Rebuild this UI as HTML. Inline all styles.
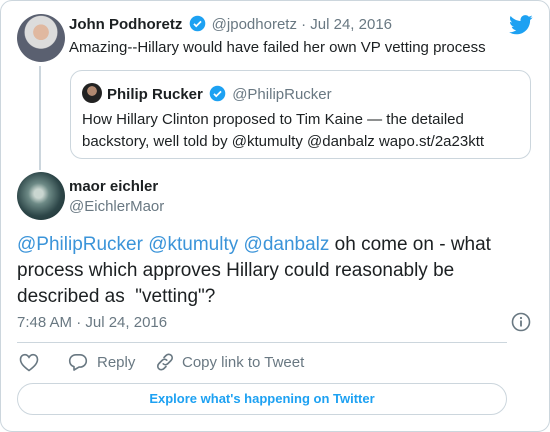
<!DOCTYPE html>
<html><head><meta charset="utf-8"><style>
*{margin:0;padding:0;box-sizing:border-box}
body{width:550px;height:432px;background:#fff;font-family:"Liberation Sans",Arial,sans-serif;color:#1c2022;position:relative;overflow:hidden}
.card{position:absolute;left:0;top:0;width:550px;height:432px;border:1px solid #ccd6dd;border-radius:12px}
.abs{position:absolute;white-space:nowrap}
.av{position:absolute;border-radius:50%}
.b{font-weight:bold}
.g{color:#697882}
.bl{color:#3b94d9}
.ver{display:inline-block;vertical-align:-3px;margin:0 2px}
</style></head><body>
<div class="card"></div>
<div class="av" style="left:17px;top:14px;width:48px;height:48px;background:radial-gradient(circle at 50% 38%,#e0b8a0 0 20%,#dcdcdc 21% 42%,#5a6070 44%);"></div>
<div class="abs b" style="left:69px;top:15px;font-size:15px">John Podhoretz <svg class="ver" width="17" height="17" viewBox="0 0 24 24"><circle cx="12" cy="12" r="11" fill="#1da1f2"/><path d="M7 12.5l3.2 3.2L17 9" stroke="#fff" stroke-width="2.4" fill="none"/></svg> <span class="g" style="font-weight:normal">@jpodhoretz · Jul 24, 2016</span></div>
<svg class="abs" style="left:509px;top:15px" width="24" height="20" viewBox="0 0 24 20"><path fill="#1da1f2" d="M23.6 2.4c-.9.4-1.8.6-2.8.8 1-.6 1.8-1.5 2.1-2.7-.9.6-2 1-3.1 1.2C19 .7 17.7.1 16.3.1c-2.7 0-4.8 2.2-4.8 4.8 0 .4 0 .8.1 1.1C7.6 5.8 4 3.9 1.6 1 1.2 1.7 1 2.5 1 3.4c0 1.7.9 3.2 2.2 4-.8 0-1.5-.2-2.2-.6v.1c0 2.3 1.7 4.3 3.9 4.7-.4.1-.8.2-1.3.2-.3 0-.6 0-.9-.1.6 1.9 2.4 3.3 4.5 3.4-1.7 1.3-3.7 2.1-6 2.1-.4 0-.8 0-1.2-.1 2.1 1.4 4.7 2.2 7.4 2.2 8.9 0 13.7-7.4 13.7-13.7v-.6c1-.7 1.8-1.5 2.5-2.6z"/></svg>
<div class="abs" style="left:69px;top:39px;font-size:15px">Amazing--Hillary would have failed her own VP vetting process</div>
<div class="abs" style="left:39px;top:66px;width:2px;height:104px;background:#ccd6dd"></div>
<div class="abs" style="left:70px;top:70px;width:461px;height:89px;border:1px solid #ccd6dd;border-radius:12px"></div>
<div class="av" style="left:82px;top:83px;width:20px;height:20px;background:radial-gradient(circle at 50% 40%,#b08870 0 30%,#222 32%)"></div>
<div class="abs b" style="left:107px;top:85px;font-size:15px">Philip Rucker <svg class="ver" width="17" height="17" viewBox="0 0 24 24"><circle cx="12" cy="12" r="11" fill="#1da1f2"/><path d="M7 12.5l3.2 3.2L17 9" stroke="#fff" stroke-width="2.4" fill="none"/></svg> <span class="g" style="font-weight:normal">@PhilipRucker</span></div>
<div class="abs" style="left:82px;top:109px;font-size:15px;line-height:22px">How Hillary Clinton proposed to Tim Kaine — the detailed<br>backstory, well told by @ktumulty @danbalz wapo.st/2a23ktt</div>
<div class="av" style="left:17px;top:172px;width:48px;height:48px;background:radial-gradient(circle at 45% 45%,#c9d6d0 0 12%,#6d8a86 28%,#2d4648 60%,#172a2c)"></div>
<div class="abs b" style="left:69px;top:178px;font-size:15px">maor eichler</div>
<div class="abs g" style="left:69px;top:198px;font-size:15px">@EichlerMaor</div>
<div class="abs" style="left:17px;top:232px;font-size:19px;line-height:26px">
<span class="bl">@PhilipRucker @ktumulty @danbalz</span> oh come on - what<br>process which approves Hillary could reasonably be<br>described as &nbsp;"vetting"?</div>
<div class="abs g" style="left:17px;top:314px;font-size:15px">7:48 AM · Jul 24, 2016</div>
<svg class="abs" style="left:511px;top:312px" width="20" height="20" viewBox="0 0 20 20"><circle cx="10" cy="10" r="8.5" stroke="#697882" stroke-width="1.6" fill="none"/><rect x="9.1" y="8.5" width="1.8" height="6" fill="#697882"/><circle cx="10" cy="6" r="1.1" fill="#697882"/></svg>
<div class="abs" style="left:17px;top:342px;width:490px;height:1px;background:#ccd6dd"></div>
<svg class="abs" style="left:19px;top:353px" width="20" height="19" viewBox="0 0 20 19"><path d="M10 17.5C4 13 1.5 10 1.5 6.2 1.5 3.6 3.5 1.7 5.8 1.7c1.8 0 3.2 1 4.2 2.6 1-1.6 2.4-2.6 4.2-2.6 2.3 0 4.3 1.9 4.3 4.5 0 3.8-2.5 6.8-8.5 11.3z" stroke="#697882" stroke-width="1.6" fill="none"/></svg>
<svg class="abs" style="left:68px;top:353px" width="20" height="19" viewBox="0 0 20 19"><path d="M8 1.8h4c3.6 0 6.3 2.7 6.3 6.1 0 3.6-3 6.2-6.6 6.2H11L6 17v-3.3C3.3 12.9 1.7 10.7 1.7 7.9 1.7 4.5 4.4 1.8 8 1.8z" stroke="#697882" stroke-width="1.6" fill="none" stroke-linejoin="round"/></svg>
<div class="abs g" style="left:97px;top:354px;font-size:15px">Reply</div>
<svg class="abs" style="left:155px;top:352px" width="20" height="20" viewBox="0 0 20 20"><g stroke="#697882" stroke-width="1.6" fill="none" stroke-linecap="round"><path d="M9 5.5l2-2c1.6-1.6 3.8-1.6 5.2-.2s1.4 3.6-.2 5.2l-3 3c-1.5 1.5-3.5 1.5-4.8.3"/><path d="M11 14.5l-2 2c-1.6 1.6-3.8 1.6-5.2.2s-1.4-3.6.2-5.2l3-3c1.5-1.5 3.5-1.5 4.8-.3"/></g></svg>
<div class="abs g" style="left:182px;top:354px;font-size:15px">Copy link to Tweet</div>
<div class="abs" style="left:17px;top:383px;width:490px;height:32px;border:1px solid #ccd6dd;border-radius:16px;text-align:center;line-height:30px;font-size:13px;font-weight:bold;color:#1da1f2">Explore what's happening on Twitter</div>
</body></html>
